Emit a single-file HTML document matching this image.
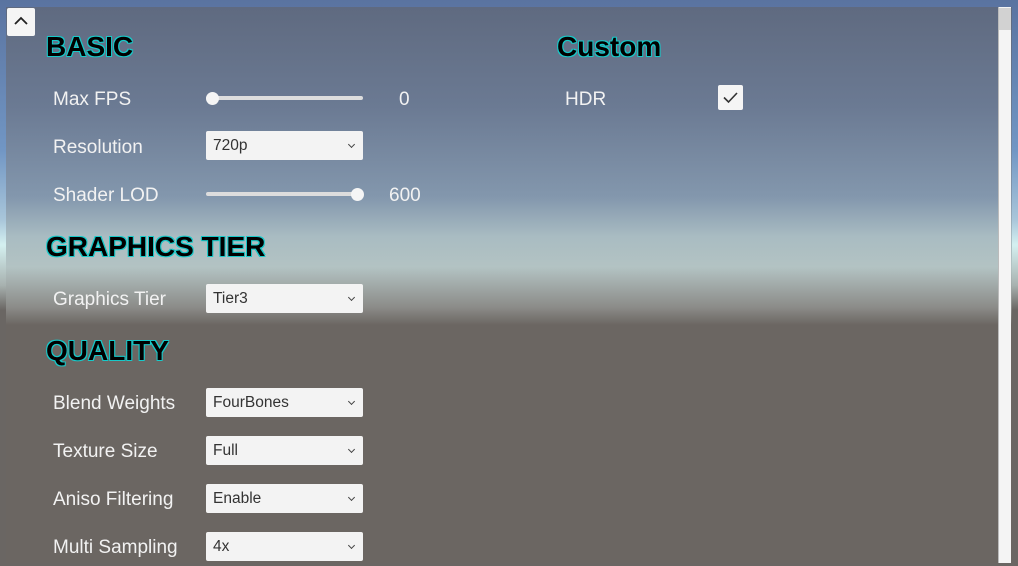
<!DOCTYPE html>
<html><head><meta charset="utf-8"><style>
html,body{margin:0;padding:0;width:1018px;height:566px;overflow:hidden;font-family:"Liberation Sans",Arial,sans-serif}
body{position:relative;background:linear-gradient(180deg,#5a73a0 0px,#7196c4 150px,#a9c6da 220px,#d4f0f0 245px,#a8b2b0 285px,#6a6663 310px,#6a6663 566px)}
#panel{position:absolute;left:6px;top:7px;width:1006px;height:556px;background:linear-gradient(180deg,#5f6a80 0px,#6b7a93 100px,#8397ad 190px,#a9bcc2 230px,#b3c3c3 260px,#8c8c89 300px,#6b6662 318px,#6b6662 556px)}
.h{position:absolute;font-weight:bold;font-size:28px;color:#000;text-shadow:0 0 1px #18d0d0,1px 1px 0 #18c8c8,-1px -1px 0 #18c8c8,1px -1px 0 #18c8c8,-1px 1px 0 #18c8c8;line-height:30px}
.l{position:absolute;color:#f2f2f2;font-size:19px;line-height:22px;margin-top:2px}
.dd{position:absolute;left:206px;width:157px;height:29px;background:#f3f3f3;border-radius:2px;box-sizing:border-box;font-size:15.5px;color:#333;line-height:29px;padding-left:7px}
.dd:after{content:"";position:absolute;right:9px;top:11px;width:4px;height:4px;border-right:1px solid #444;border-bottom:1px solid #444;transform:rotate(45deg)}
.tr{position:absolute;left:206px;width:157px;height:4px;background:#ddd;border-radius:2px}
.kn{position:absolute;width:13px;height:13px;border-radius:50%;background:#f5f5f5}
.v{position:absolute;color:#f2f2f2;font-size:19px;line-height:22px;margin-top:2px}
</style></head><body>
<div id="panel"></div>
<div style="position:absolute;left:7px;top:8px;width:28px;height:28px;background:#f5f5f5;border-radius:2px"><svg width="28" height="28"><path d="M8 16 L14 10 L20 16" fill="none" stroke="#222" stroke-width="1.8"/></svg></div>
<div style="position:absolute;left:998px;top:7px;width:13px;height:556px;background:#f4f4f4;border-left:1px solid #bbb;box-sizing:border-box"></div>
<div style="position:absolute;left:999px;top:8px;width:12px;height:22px;background:#d2d2d2"></div>

<div class="h" style="left:46px;top:32px">BASIC</div>
<div class="l" style="left:53px;top:87px">Max FPS</div>
<div class="tr" style="top:96px"></div><div class="kn" style="left:206px;top:92px"></div>
<div class="v" style="left:399px;top:87px">0</div>
<div class="l" style="left:53px;top:135px">Resolution</div>
<div class="dd" style="top:131px">720p</div>
<div class="l" style="left:53px;top:183px">Shader LOD</div>
<div class="tr" style="top:192px"></div><div class="kn" style="left:351px;top:188px"></div>
<div class="v" style="left:389px;top:183px">600</div>

<div class="h" style="left:46px;top:232px">GRAPHICS TIER</div>
<div class="l" style="left:53px;top:287px">Graphics Tier</div>
<div class="dd" style="top:284px">Tier3</div>

<div class="h" style="left:46px;top:336px">QUALITY</div>
<div class="l" style="left:53px;top:391px">Blend Weights</div>
<div class="dd" style="top:388px">FourBones</div>
<div class="l" style="left:53px;top:439px">Texture Size</div>
<div class="dd" style="top:436px">Full</div>
<div class="l" style="left:53px;top:487px">Aniso Filtering</div>
<div class="dd" style="top:484px">Enable</div>
<div class="l" style="left:53px;top:535px">Multi Sampling</div>
<div class="dd" style="top:532px">4x</div>

<div class="h" style="left:557px;top:32px">Custom</div>
<div class="l" style="left:565px;top:87px">HDR</div>
<div style="position:absolute;left:718px;top:85px;width:25px;height:25px;background:#f5f5f5;border-radius:2px"><svg width="25" height="25"><path d="M6 12.5 L10.5 17 L19 8" fill="none" stroke="#333" stroke-width="1.6"/></svg></div>
</body></html>
